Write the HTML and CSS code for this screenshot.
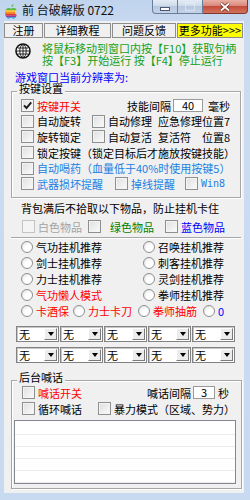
FILE: index.html
```html
<!DOCTYPE html>
<html lang="zh-CN">
<head>
    <meta charset="UTF-8">
    <title>前 台破解版 0722</title>
    <link rel="stylesheet" href="styles.css">
</head>
<body>
<div class="window">
    <div class="titlebar">
        <svg class="app-icon" viewBox="0 0 14 15">
            <defs>
                <clipPath id="apple">
                    <path d="M9.6 0.3c0.1 1.2-0.9 2.6-2.2 2.7-0.2-1.2 0.9-2.5 2.2-2.7z M12.8 11c-0.6 1.6-1.7 3.7-3.1 3.7-1.2 0-1.4-0.6-2.6-0.6s-1.5 0.6-2.6 0.6C2.9 14.7 1 11.6 1 8.6 1 5.9 2.7 4.1 4.5 4.1c1.1 0 2 0.7 2.5 0.7s1.6-0.8 2.8-0.7c0.5 0 2 0.2 2.9 1.5-2.4 1.3-2 4.7 0.1 5.4z"/>
                </clipPath>
            </defs>
            <g clip-path="url(#apple)">
                <rect y="0" width="14" height="6.2" fill="#5db946"/>
                <rect y="6.2" width="14" height="1.9" fill="#fcc02a"/>
                <rect y="8.1" width="14" height="1.9" fill="#f5821f"/>
                <rect y="10" width="14" height="1.7" fill="#e0393e"/>
                <rect y="11.7" width="14" height="1.6" fill="#963d97"/>
                <rect y="13.3" width="14" height="2" fill="#1a9ddc"/>
            </g>
        </svg>
        <span class="title">前 台破解版 0722</span>
        <div class="caption-btns">
            <span class="cap min"><i></i></span>
            <span class="cap max"><i></i></span>
            <span class="cap close">
                <svg viewBox="0 0 12 10" width="12" height="10">
                    <path d="M2 1.5 L10 8.5 M10 1.5 L2 8.5" stroke="#6a2a22" stroke-width="3.2"/>
                    <path d="M2 1.5 L10 8.5 M10 1.5 L2 8.5" stroke="#fff" stroke-width="1.8"/>
                </svg>
            </span>
        </div>
    </div>

    <div class="client">
        <div class="tabs">
            <span class="tab t1">注册</span>
            <span class="tab t2">详细教程</span>
            <span class="tab t3">问题反馈</span>
            <span class="tab t4">更多功能&gt;&gt;&gt;</span>
        </div>

        <div class="hint">
            <svg class="target" viewBox="0 0 16 16">
                <circle cx="8" cy="8" r="7" fill="#fff" stroke="#111" stroke-width="1.6"/>
                <ellipse cx="8" cy="8" rx="3.2" ry="6.5" fill="none" stroke="#222" stroke-width="1"/>
                <path d="M1.5 8 H14.5 M8 1.5 V14.5 M3 5 H13 M3 11 H13" stroke="#222" stroke-width="1"/>
            </svg>
            <p>将鼠标移动到窗口内按【F10】获取句柄<br>按【F3】开始运行 按【F4】停止运行</p>
        </div>

        <div class="res">游戏窗口当前分辨率为:</div>

        <div class="group keys">
            <div class="group-title">按键设置</div>
            <div class="rows">
                <div class="row">
                    <label class="chk w106"><span class="cb on"><svg viewBox="0 0 11 11" width="11" height="11"><path d="M2 5.3 L4.5 8 L9.2 2.3" stroke="#1a1a1a" stroke-width="1.9" fill="none"/></svg></span><span class="red">按键开关</span></label>
                    <span>技能间隔</span>
                    <span class="edit e40">40</span>
                    <span class="unit">毫秒</span>
                </div>
                <div class="row">
                    <label class="chk w71"><span class="cb"></span>自动旋转</label>
                    <label class="chk w66"><span class="cb"></span>自动修理</label>
                    <span>应急修理位置7</span>
                </div>
                <div class="row">
                    <label class="chk w71"><span class="cb"></span>旋转锁定</label>
                    <label class="chk w66"><span class="cb"></span>自动复活</label>
                    <span class="w44">复活符</span>
                    <span>位置8</span>
                </div>
                <div class="row">
                    <label class="chk"><span class="cb"></span>锁定按键（锁定目标后才施放按键技能）</label>
                </div>
                <div class="row">
                    <label class="chk sky"><span class="cb"></span>自动喝药（血量低于40%时使用按键5）</label>
                </div>
                <div class="row">
                    <label class="chk w94 sky"><span class="cb"></span>武器损坏提醒</label>
                    <label class="chk w70 sky"><span class="cb"></span>掉线提醒</label>
                    <label class="chk sky"><span class="cb"></span><span class="mono">Win8</span></label>
                </div>
            </div>
        </div>

        <div class="bag">背包满后不拾取以下物品，防止挂机卡住</div>
        <div class="row items">
            <label class="chk w66 gray"><span class="cb off"></span>白色物品</label>
            <label class="chk w77 green"><span class="cb"></span><span class="pad">绿色物品</span></label>
            <label class="chk blue"><span class="cb"></span>蓝色物品</label>
        </div>

        <div class="divider"></div>

        <div class="radios">
            <div class="row">
                <label class="chk w122"><span class="rb"></span>气功挂机推荐</label>
                <label class="chk"><span class="rb"></span>召唤挂机推荐</label>
            </div>
            <div class="row">
                <label class="chk w122"><span class="rb"></span>剑士挂机推荐</label>
                <label class="chk"><span class="rb"></span>刺客挂机推荐</label>
            </div>
            <div class="row">
                <label class="chk w122"><span class="rb"></span>力士挂机推荐</label>
                <label class="chk"><span class="rb"></span>灵剑挂机推荐</label>
            </div>
            <div class="row">
                <label class="chk w122 red"><span class="rb"></span>气功懒人模式</label>
                <label class="chk"><span class="rb"></span>拳师挂机推荐</label>
            </div>
            <div class="row">
                <label class="chk w52 red"><span class="rb"></span>卡酒保</label>
                <label class="chk w65 red"><span class="rb"></span>力士卡刀</label>
                <label class="chk w65 red"><span class="rb"></span>拳师抽筋</label>
                <label class="chk blue"><span class="rb"></span>0</label>
            </div>
        </div>

        <div class="combos">
            <span class="combo">无<span class="drop"></span></span>
            <span class="combo">无<span class="drop"></span></span>
            <span class="combo">无<span class="drop"></span></span>
            <span class="combo">无<span class="drop"></span></span>
            <span class="combo">无<span class="drop"></span></span>
            <span class="combo">无<span class="drop"></span></span>
            <span class="combo">无<span class="drop"></span></span>
            <span class="combo">无<span class="drop"></span></span>
            <span class="combo">无<span class="drop"></span></span>
            <span class="combo">无<span class="drop"></span></span>
        </div>

        <div class="group chat">
            <div class="group-title">后台喊话</div>
            <div class="rows">
                <div class="row">
                    <label class="chk w125 red"><span class="cb"></span>喊话开关</label>
                    <span>喊话间隔</span>
                    <span class="edit e3">3</span>
                    <span class="unit-s">秒</span>
                </div>
                <div class="row">
                    <label class="chk w76"><span class="cb"></span>循环喊话</label>
                    <label class="chk"><span class="cb"></span>暴力模式（区域、势力）</label>
                </div>
            </div>
            <div class="listbox"></div>
        </div>
    </div>
</div>
</body>
</html>
```

FILE: styles.css
```css
/* ===== Window frame ===== */
body {
    margin: 0;
    background: #c6d9ef;
    font-family: "Noto Sans CJK SC", "Liberation Sans", sans-serif;
    font-size: 11px;
    color: #000;
}

.window {
    width: 250px;
    height: 500px;
    overflow: hidden;
    background: linear-gradient(#c0d4ed, #cbdcf1 40px, #c8daf0);
}

.titlebar {
    height: 21px;
    display: flex;
    align-items: flex-start;
}

.app-icon {
    width: 14px;
    height: 15px;
    margin: 4px 0 0 4px;
    flex: none;
}

.title {
    margin-left: 4px;
    font-size: 12px;
    line-height: 20px;
    color: #111;
    white-space: nowrap;
}

.caption-btns {
    display: flex;
    margin-left: auto;
    margin-right: 2px;
}

.cap {
    height: 14px;
    box-sizing: border-box;
    border: 1px solid #687e9b;
    border-top: none;
    display: flex;
    align-items: center;
    justify-content: center;
    background: linear-gradient(#e3ebf6, #cfdbeb 45%, #b7c7dd 50%, #c4d3e8);
}

.min {
    width: 26px;
    border-radius: 0 0 0 4px;
}

.min i {
    width: 8px;
    height: 2px;
    margin-top: 4px;
    background: #fff;
    border: 1px solid #4a5a72;
}

.max {
    width: 25px;
    border-left: none;
}

.max i {
    width: 8px;
    height: 6px;
    border: 1px solid #e4ebf4;
    border-top-width: 2px;
    opacity: .7;
}

.close {
    width: 45px;
    border-left: none;
    border-color: #83372c;
    border-radius: 0 0 4px 0;
    background: linear-gradient(#eab0a3, #d9887a 45%, #c44c3b 50%, #d2735e);
}

/* ===== Client area ===== */
.client {
    height: 472px;
    margin: 0 6px 0 4px;
    background: #f0f0f0;
}

.tabs {
    display: flex;
    gap: 1px;
    padding-top: 2px;
}

.tab {
    height: 15px;
    box-sizing: border-box;
    border: 1px solid #8e8e8e;
    text-align: center;
    line-height: 13px;
    white-space: nowrap;
}

.t1 { width: 39px; }
.t2 { width: 67px; }
.t3 { width: 64px; }
.t4 { width: 66px; background: #ffff00; }

.hint {
    display: flex;
    margin: 4px 0 0 11px;
}

.target {
    width: 16px;
    height: 16px;
    margin-top: 1px;
    flex: none;
}

.hint p {
    margin: 0 0 0 11px;
    line-height: 12px;
    color: #17a017;
    white-space: nowrap;
}

.res {
    margin: 5px 0 0 11px;
    line-height: 12px;
    color: #0000ff;
}

/* ===== Group boxes ===== */
.group {
    border: 1px solid #a6a6a6;
    box-shadow: inset 1px 1px #fff, 1px 1px #fff;
}

.group-title {
    width: max-content;
    margin: -9px 0 0 5px;
    padding: 0 2px;
    line-height: 11px;
    background: #f0f0f0;
}

.keys {
    margin: 8px 3px 0 7px;
}

.keys .rows {
    padding: 4px 0 5px 9px;
}

.keys .row {
    height: 15.6px;
}

.chat {
    height: 109px;
    box-sizing: border-box;
    margin: 17px 2px 0 7px;
}

.chat .rows {
    padding: 2px 0 0 10px;
}

/* ===== Rows and controls ===== */
.row {
    display: flex;
    align-items: center;
    height: 16px;
    white-space: nowrap;
}

.chk {
    display: flex;
    align-items: center;
    flex: none;
}

.w44 { width: 44px; }
.w52 { width: 52px; }
.w65 { width: 65px; }
.w66 { width: 66px; }
.w70 { width: 70px; }
.w71 { width: 71px; }
.w76 { width: 76px; }
.w77 { width: 77px; }
.w94 { width: 94px; }
.w106 { width: 106px; }
.w122 { width: 122px; }
.w125 { width: 125px; }

.cb {
    width: 13px;
    height: 13px;
    box-sizing: border-box;
    margin-right: 3px;
    flex: none;
    display: flex;
    align-items: center;
    justify-content: center;
    border: 1px solid #8e8f8f;
    background: linear-gradient(135deg, #dedfe1, #fbfbfb);
    box-shadow: inset 0 0 0 1px #f4f4f4;
}

.cb.off {
    border-color: #c3c3c3;
    background: #f4f4f4;
}

.rb {
    width: 12px;
    height: 12px;
    box-sizing: border-box;
    margin-right: 3px;
    flex: none;
    border-radius: 50%;
    border: 1px solid #8e8f8f;
    background: radial-gradient(circle at 65% 65%, #fff 0 35%, #dcdcdc);
}

.edit {
    height: 13px;
    box-sizing: border-box;
    margin-left: 2px;
    border: 1px solid #9a9a9a;
    background: #fff;
    text-align: center;
    line-height: 11px;
}

.e40 { width: 30px; }
.e3 { width: 22px; }

.unit { margin-left: 5px; }
.unit-s { margin-left: 3px; }

.mono {
    font-family: "DejaVu Sans Mono", monospace;
    font-size: 10px;
}

.pad { margin-left: 6px; }

.red { color: #ff0000; }
.sky { color: #1c80e4; }
.blue { color: #0000ff; }
.green { color: #008000; }
.gray { color: #a3a3a3; }

/* ===== Item filter ===== */
.bag {
    margin: 4px 0 0 17px;
    line-height: 12px;
}

.items {
    margin-top: 5px;
    padding-left: 18px;
}

.divider {
    margin: 2px 3px 0 7px;
    border-top: 1px solid #a6a6a6;
    border-bottom: 1px solid #fff;
}

.radios {
    padding-left: 17px;
}

/* ===== Combo boxes ===== */
.combos {
    display: grid;
    grid-template-columns: repeat(5, 43px);
    gap: 5px 1px;
    margin: 7px 0 0 12px;
}

.combo {
    height: 16px;
    box-sizing: border-box;
    display: flex;
    padding-left: 2px;
    line-height: 14px;
    border: 1px solid #828282;
    box-shadow: inset 1px 1px #c8c8c8;
    background: #fff;
}

.drop {
    width: 13px;
    margin: 1px 1px 1px auto;
    box-sizing: border-box;
    display: flex;
    align-items: center;
    justify-content: center;
    background: #ececec;
    border: 1px solid;
    border-color: #fff #7a7a7a #7a7a7a #fff;
}

.drop::after {
    content: '';
    border-top: 4px solid #000;
    border-left: 3.5px solid transparent;
    border-right: 3.5px solid transparent;
}

/* ===== Chat list ===== */
.listbox {
    width: 222px;
    height: 64px;
    box-sizing: border-box;
    margin: 3px 0 0 2px;
    border: 1px solid #828790;
    background: repeating-linear-gradient(#fff 0 11px, #ececec 11px 12px);
    background-position: 0 2px;
}
```
